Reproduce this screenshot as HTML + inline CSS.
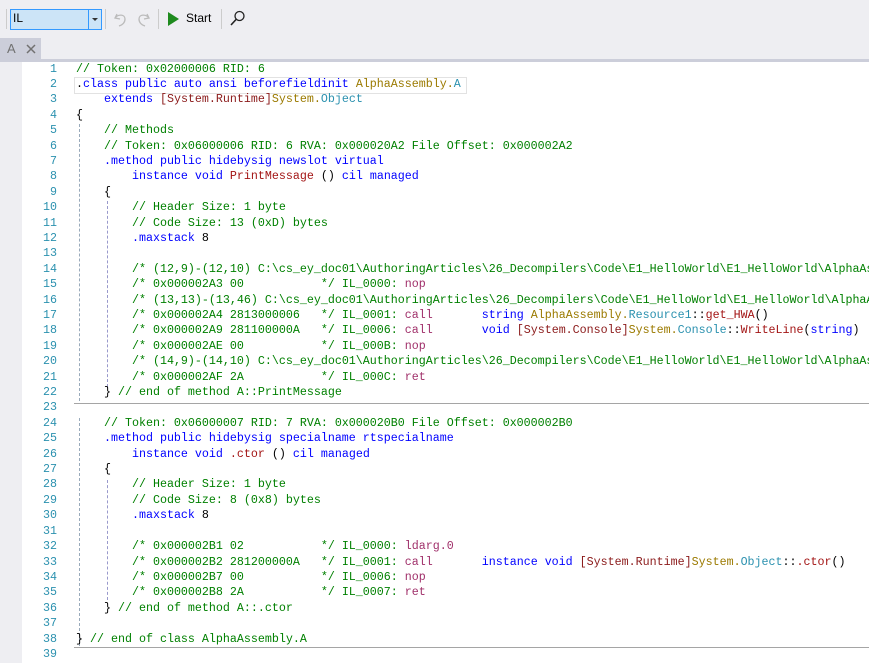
<!DOCTYPE html><html><head><style>
body{margin:0;width:869px;height:663px;background:#eeeef2;overflow:hidden;font-family:"Liberation Sans",sans-serif;position:relative}
.abs{position:absolute}
pre{margin:0;font-family:"Liberation Mono",monospace;font-size:11.67px;line-height:15.4px}
.c{color:#008000}.k{color:#0000ff}.b{color:#8b1a1a}.ns{color:#9b7a00}.t{color:#2b91af}.m{color:#a31515}.o{color:#a0306a}
</style></head><body>
<div class="abs" style="left:6px;top:9px;width:1px;height:20px;background:#ccc"></div>
<div class="abs" style="left:10px;top:9px;width:90px;height:19px;background:#cce4f7;border:1px solid #3399ff;"></div>
<div class="abs" style="left:13px;top:11px;font-size:12px">IL</div>
<div class="abs" style="left:88px;top:10px;width:1px;height:19px;background:#3399ff"></div>
<div class="abs" style="left:92px;top:18px;width:0;height:0;border-left:3px solid transparent;border-right:3px solid transparent;border-top:3px solid #333"></div>
<div class="abs" style="left:105px;top:9px;width:1px;height:20px;background:#ccc"></div>
<svg class="abs" style="left:112px;top:9px" width="40" height="20"><path d="M5 5 L3 9 L8 10 M3 9 C6 5 13 5 13 10 C13 14 10 16 7 17" fill="none" stroke="#bbb" stroke-width="1.3"/><path d="M35 5 L37 9 L32 10 M37 9 C34 5 27 5 27 10 C27 14 30 16 33 17" fill="none" stroke="#bbb" stroke-width="1.3"/></svg>
<div class="abs" style="left:158px;top:9px;width:1px;height:20px;background:#ccc"></div>
<svg class="abs" style="left:167px;top:11px" width="14" height="16"><path d="M1 1 L12 8 L1 15Z" fill="#1e8a1e"/></svg>
<div class="abs" style="left:186px;top:11px;font-size:12px">Start</div>
<div class="abs" style="left:221px;top:9px;width:1px;height:20px;background:#ccc"></div>
<svg class="abs" style="left:229px;top:9px" width="18" height="18"><circle cx="10.5" cy="7" r="4.5" fill="none" stroke="#222" stroke-width="1.3"/><path d="M7.5 10 L2 16" stroke="#222" stroke-width="1.6"/></svg>
<div class="abs" style="left:0;top:38px;width:41px;height:21px;background:#ccceda"></div>
<div class="abs" style="left:7px;top:41px;font-size:13px;color:#717171">A</div>
<svg class="abs" style="left:26px;top:44px" width="10" height="10"><path d="M1 1L9 9M9 1L1 9" stroke="#717171" stroke-width="1.5"/></svg>
<div class="abs" style="left:0;top:59px;width:869px;height:3px;background:#ccceda"></div>
<div class="abs" style="left:22px;top:62px;width:847px;height:601px;background:#fff;overflow:hidden">
<div class="abs" style="left:52px;top:15px;width:391px;height:15px;border:1px solid #e2e2e2"></div>
<div class="abs" style="left:52px;top:341px;width:795px;height:1px;background:#a5a5a5"></div>
<div class="abs" style="left:52px;top:585px;width:795px;height:1px;background:#a5a5a5"></div>
<div class="abs" style="left:57px;top:62px;height:277px;border-left:1px dashed #9ab"></div>
<div class="abs" style="left:57px;top:356px;height:228px;border-left:1px dashed #9ab"></div>
<div class="abs" style="left:85px;top:139px;height:186px;border-left:1px dashed #99c"></div>
<div class="abs" style="left:85px;top:418px;height:120px;border-left:1px dashed #99c"></div>
<pre class="abs t" style="left:0;top:-0.5px;width:35px;text-align:right">1
2
3
4
5
6
7
8
9
10
11
12
13
14
15
16
17
18
19
20
21
22
23
24
25
26
27
28
29
30
31
32
33
34
35
36
37
38
39</pre>
<pre class="abs" style="left:54px;top:-0.5px"><span class="c">// Token: 0x02000006 RID: 6</span>
.<span class="k">class public auto ansi beforefieldinit</span> <span class="ns">AlphaAssembly.</span><span class="t">A</span>
    <span class="k">extends</span> <span class="b">[System.Runtime]</span><span class="ns">System.</span><span class="t">Object</span>
{
    <span class="c">// Methods</span>
    <span class="c">// Token: 0x06000006 RID: 6 RVA: 0x000020A2 File Offset: 0x000002A2</span>
    <span class="k">.method public hidebysig newslot virtual</span>
        <span class="k">instance void</span> <span class="m">PrintMessage</span> () <span class="k">cil managed</span>
    {
        <span class="c">// Header Size: 1 byte</span>
        <span class="c">// Code Size: 13 (0xD) bytes</span>
        <span class="k">.maxstack</span> 8

        <span class="c">/* (12,9)-(12,10) C:\cs_ey_doc01\AuthoringArticles\26_Decompilers\Code\E1_HelloWorld\E1_HelloWorld\AlphaAssembly.cs */</span>
        <span class="c">/* 0x000002A3 00           */ IL_0000: </span><span class="o">nop</span>
        <span class="c">/* (13,13)-(13,46) C:\cs_ey_doc01\AuthoringArticles\26_Decompilers\Code\E1_HelloWorld\E1_HelloWorld\AlphaAssembly.cs */</span>
        <span class="c">/* 0x000002A4 2813000006   */ IL_0001: </span><span class="o">call</span>       <span class="k">string</span> <span class="ns">AlphaAssembly.</span><span class="t">Resource1</span>::<span class="m">get_HWA</span>()
        <span class="c">/* 0x000002A9 281100000A   */ IL_0006: </span><span class="o">call</span>       <span class="k">void</span> <span class="b">[System.Console]</span><span class="ns">System.</span><span class="t">Console</span>::<span class="m">WriteLine</span>(<span class="k">string</span>)
        <span class="c">/* 0x000002AE 00           */ IL_000B: </span><span class="o">nop</span>
        <span class="c">/* (14,9)-(14,10) C:\cs_ey_doc01\AuthoringArticles\26_Decompilers\Code\E1_HelloWorld\E1_HelloWorld\AlphaAssembly.cs */</span>
        <span class="c">/* 0x000002AF 2A           */ IL_000C: </span><span class="o">ret</span>
    } <span class="c">// end of method A::PrintMessage</span>

    <span class="c">// Token: 0x06000007 RID: 7 RVA: 0x000020B0 File Offset: 0x000002B0</span>
    <span class="k">.method public hidebysig specialname rtspecialname</span>
        <span class="k">instance void</span> <span class="m">.ctor</span> () <span class="k">cil managed</span>
    {
        <span class="c">// Header Size: 1 byte</span>
        <span class="c">// Code Size: 8 (0x8) bytes</span>
        <span class="k">.maxstack</span> 8

        <span class="c">/* 0x000002B1 02           */ IL_0000: </span><span class="o">ldarg.0</span>
        <span class="c">/* 0x000002B2 281200000A   */ IL_0001: </span><span class="o">call</span>       <span class="k">instance void</span> <span class="b">[System.Runtime]</span><span class="ns">System.</span><span class="t">Object</span>::<span class="m">.ctor</span>()
        <span class="c">/* 0x000002B7 00           */ IL_0006: </span><span class="o">nop</span>
        <span class="c">/* 0x000002B8 2A           */ IL_0007: </span><span class="o">ret</span>
    } <span class="c">// end of method A::.ctor</span>

} <span class="c">// end of class AlphaAssembly.A</span>
</pre>
</div>
</body></html>
